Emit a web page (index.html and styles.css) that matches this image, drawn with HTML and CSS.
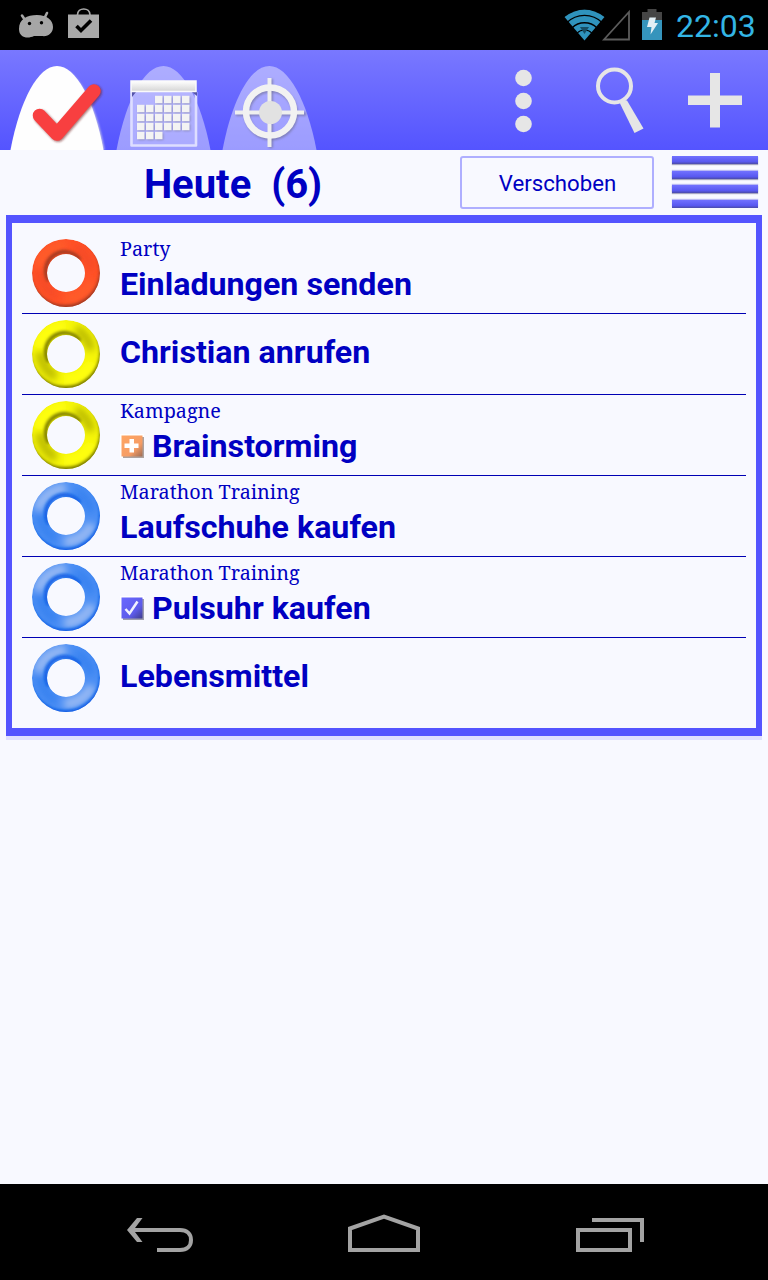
FILE: index.html
```html
<!DOCTYPE html>
<html lang="de">
<head>
    <meta charset="UTF-8">
    <title>Heute</title>
    <link rel="stylesheet" href="styles.css">
</head>
<body>
    <!-- shared gradients and the ring shape -->
    <svg class="defs" width="0" height="0">
        <defs>
            <clipPath id="ringClip">
                <path clip-rule="evenodd" d="M0 34a34 34 0 1 0 68 0a34 34 0 1 0-68 0zM15 34a19 19 0 1 0 38 0a19 19 0 1 0-38 0z"/>
            </clipPath>
            <filter id="soft" x="-30%" y="-30%" width="160%" height="160%"><feGaussianBlur stdDeviation="3.500"/></filter>
            <filter id="soft1" x="-30%" y="-30%" width="160%" height="160%"><feGaussianBlur stdDeviation="1"/></filter>
            <filter id="soft2" x="-30%" y="-30%" width="160%" height="160%"><feGaussianBlur stdDeviation="1.600"/></filter>
            <linearGradient id="head" x1="0" y1="0" x2="0" y2="1">
                <stop offset="0" stop-color="#fff"/><stop offset="1" stop-color="#d4d4d4"/>
            </linearGradient>
            <linearGradient id="orange" x1="0" y1="0" x2="1" y2="1">
                <stop offset="0" stop-color="#ffa562"/><stop offset="0.65" stop-color="#f69d65"/><stop offset="1" stop-color="#9c6c55"/>
            </linearGradient>
            <linearGradient id="violet" x1="0" y1="0" x2="1" y2="1">
                <stop offset="0" stop-color="#6a68ff"/><stop offset="0.65" stop-color="#5d5bea"/><stop offset="1" stop-color="#3f3d8c"/>
            </linearGradient>
            <symbol id="ring" viewBox="0 0 68 68">
                <g clip-path="url(#ringClip)">
                    <circle class="ring-base" cx="34" cy="34" r="34"/>
                    <g filter="url(#soft)" fill="none">
                        <path class="ring-mid" d="M8 32Q9 48 24 57M44 9Q56 15 59 30"/>
                        <path class="ring-light" d="M6 28Q11 9 34 6M32 60Q52 59 60 42"/>
                    </g>
                    <g filter="url(#soft2)" fill="none">
                        <circle class="ring-edge" cx="33" cy="31.500" r="37.500"/>
                        <path class="ring-inner" d="M17 42A18.500 18.500 0 0 1 48 21"/>
                    </g>
                </g>
            </symbol>
        </defs>
    </svg>

    <div class="statusbar">
        <svg width="110" height="50" viewBox="0 0 110 50">
            <path fill="#a6a6a6" d="M19 29C19 19 27 15 37 15C47 15 53 20 53 27C53 33 48 37 42 36H34C28 39 19 38 19 29z"/>
            <path stroke="#a6a6a6" stroke-width="2.600" stroke-linecap="round" d="M22 15.500l3 4.500M47 13l-2.500 5"/>
            <circle cx="29.500" cy="23.500" r="1.700"/><circle cx="41.500" cy="22.700" r="1.700"/>
            <path fill="#a9a9a9" d="M68 14.500h31V38H68z"/>
            <path fill="none" stroke="#a9a9a9" stroke-width="1.700" d="M77.500 15c0-8 12.500-8 12.500 0"/>
            <path fill="none" stroke="#000" stroke-width="3.600" d="M76.500 26l4.500 4.500l10-10"/>
        </svg>
        <div class="system">
            <svg width="105" height="50" viewBox="0 0 105 50">
                <clipPath id="wifi"><path d="M24.500 40.500L4.500 17Q24.500 2 44.500 17z"/></clipPath>
                <g clip-path="url(#wifi)" fill="none" stroke="#2f93bd">
                    <circle cx="24.500" cy="40.500" r="28.500" stroke-width="5.500"/>
                    <circle cx="24.500" cy="40.500" r="21.500" stroke-width="6"/>
                    <circle cx="24.500" cy="40.500" r="14" stroke-width="6"/>
                    <circle cx="24.500" cy="40.500" r="5" stroke-width="10"/>
                </g>
                <path fill="#174f66" d="M20 27h9l-4.500 7z"/>
                <path fill="none" stroke="#5c5c5c" stroke-width="1.800" d="M69 12v27.500H44z"/>
                <path fill="#454545" d="M82 12h5.500V9h9v3h5.500v8H82z"/>
                <path fill="#3594bc" d="M82 20h20v20H82z"/>
                <path fill="#e2eff5" d="M89.500 17.500h6.500L94.500 23H98l-7.500 11.500L91.500 27H87z"/>
            </svg>
            <span class="clock">22:03</span>
        </div>
    </div>

    <div class="toolbar">
        <svg width="330" height="100" viewBox="0 0 330 100">
            <path fill="#c9c9e8" d="M12 100C22 50 41 18 58 18C76 18 95 50 104.500 100z" filter="url(#soft1)"/>
            <path fill="#fefefe" d="M10.500 100C20 50 38 16 57 16C76 16 94 50 103.500 100z"/>
            <path fill="none" stroke="#702020" stroke-opacity=".6" stroke-width="14" stroke-linejoin="round" stroke-linecap="round" filter="url(#soft1)" d="M41 67l17 18l37-43"/>
            <path fill="none" stroke="#f83f40" stroke-width="13.500" stroke-linejoin="round" stroke-linecap="round" d="M39.500 65.500L57 84L94 41"/>
            <g fill="#fff" fill-opacity=".42">
                <path d="M116.500 100C126 50 144 16 163.500 16C182 16 201 50 210.500 100z"/>
                <path d="M222.500 100C232 50 250 16 269.500 16C288 16 307 50 316.500 100z"/>
            </g>
            <path fill="#fff" fill-opacity=".15" stroke="#dedeff" stroke-width="2.600" stroke-linejoin="round" d="M131.500 42V95.500h64.500V42"/>
            <path fill="#5554a8" d="M132 42h4l-4 5zM192 42h5v4z"/>
            <path fill="url(#head)" stroke="#fafafa" stroke-width="1.500" d="M131 31h65v10.500h-65z"/>
            <g stroke="#76769a" stroke-opacity=".65" stroke-width="7" stroke-dasharray="7.300 1.700" filter="url(#soft1)">
                <path d="M156 50.500h35M138 59.500h53M138 68.500h53M138 77.500h53M138 86.500h26"/>
            </g>
            <g stroke="#f3f3f3" stroke-width="7.400" stroke-dasharray="7.500 1.500">
                <path d="M155 49.500h35.500M137 58.500h53.500M137 67.500h53.500M137 76.500h53.500M137 85.500h26.500"/>
            </g>
            <g fill="none" stroke="#70709a" stroke-opacity=".65" filter="url(#soft1)">
                <circle cx="271" cy="63.500" r="24" stroke-width="6"/>
                <path stroke-width="4" d="M271 29v69M236 64h70"/>
            </g>
            <path stroke="#efefef" stroke-width="4" d="M269.500 28v69M235 62.500h69"/>
            <circle fill="none" stroke="#f2f2f2" stroke-width="6.500" cx="270" cy="61.500" r="24"/>
            <circle fill="#e2e2e2" cx="270.500" cy="62.500" r="11.500"/>
        </svg>
        <svg width="278" height="100" viewBox="0 0 278 100">
            <g fill="#e6e6e6">
                <circle cx="33.500" cy="28" r="8.300"/><circle cx="33.500" cy="51" r="8.300"/><circle cx="33.500" cy="74" r="8.300"/>
                <path d="M130 53.500q2-4 7-3l16.500 28l-9 4.500z"/>
                <path d="M220 23h10v22.500h22v9.500h-22v22.500h-10V55h-22v-9.500h22z"/>
            </g>
            <circle fill="none" stroke="#e6e6e6" stroke-width="4" cx="124.500" cy="36" r="16.500"/>
        </svg>
    </div>

    <div class="titlebar">
        <h1>Heute  (6)</h1>
        <button class="postponed">Verschoben</button>
        <div class="menu">
            <span></span><span></span><span></span><span></span>
        </div>
    </div>

    <div class="list">
        <div class="task">
            <svg class="ring red"><use href="#ring"/></svg>
            <div class="text">
                <div class="project">Party</div>
                <div class="name">Einladungen senden</div>
            </div>
        </div>
        <div class="task">
            <svg class="ring yellow"><use href="#ring"/></svg>
            <div class="text">
                <div class="name">Christian anrufen</div>
            </div>
        </div>
        <div class="task">
            <svg class="ring yellow"><use href="#ring"/></svg>
            <div class="text">
                <div class="project">Kampagne</div>
                <div class="name">
                    <svg class="badge" viewBox="0 0 24 24">
                        <path fill="#fff" d="M0 0h24v24H0z"/>
                        <path fill="#998b86" d="M3 3h21v21H3z" opacity=".8"/>
                        <path fill="url(#orange)" d="M1.500 1.500h21v21h-21z"/>
                        <path fill="#fff" d="M9.500 5h4.500v4.500H18.500V14H14v4.500H9.500V14H4.500V9.500H9.500z"/>
                    </svg>
                    Brainstorming
                </div>
            </div>
        </div>
        <div class="task">
            <svg class="ring blue"><use href="#ring"/></svg>
            <div class="text">
                <div class="project">Marathon Training</div>
                <div class="name">Laufschuhe kaufen</div>
            </div>
        </div>
        <div class="task">
            <svg class="ring blue"><use href="#ring"/></svg>
            <div class="text">
                <div class="project">Marathon Training</div>
                <div class="name">
                    <svg class="badge" viewBox="0 0 24 24">
                        <path fill="#fff" d="M0 0h24v24H0z"/>
                        <path fill="#85859a" d="M3 3h21v21H3z" opacity=".8"/>
                        <path fill="url(#violet)" d="M1.500 1.500h21v21h-21z"/>
                        <path fill="none" stroke="#f2f2ff" stroke-width="2.500" d="M5.500 13l4 4.500l8-12"/>
                    </svg>
                    Pulsuhr kaufen
                </div>
            </div>
        </div>
        <div class="task">
            <svg class="ring blue"><use href="#ring"/></svg>
            <div class="text">
                <div class="name">Lebensmittel</div>
            </div>
        </div>
    </div>

    <div class="navbar">
        <svg width="768" height="96" viewBox="0 0 768 96" fill="none" stroke="#a3a3a3" stroke-width="4">
            <path d="M130 46h50c7 0 11 4 11 10s-4 10-11 10H157"/>
            <path fill="#a3a3a3" stroke="none" d="M137 34h5.500l-9 12l9 12H137l-10-12z"/>
            <path d="M350 44.500v21.500h68v-21.500l-34-12z"/>
            <path d="M578 46h52v20h-52zM592 36h50v22"/>
        </svg>
    </div>
</body>
</html>
```
FILE: styles.css
```css
* {
    box-sizing: border-box;
}
body {
    margin: 0;
    height: 1280px;
    display: flex;
    flex-direction: column;
    background: #f8f9ff;
    color: #0000c2;
    font-family: Roboto, sans-serif;
    overflow: hidden;
}
svg {
    display: block;
    flex: none;
}
.defs {
    position: absolute;
}
.statusbar {
    display: flex;
    justify-content: space-between;
    height: 50px;
    background: #000;
}
.system {
    display: flex;
    width: 208px;
}
.clock {
    margin-left: 11px;
    color: #33b5e5;
    font-size: 32px;
    line-height: 53px;
}
.toolbar {
    display: flex;
    justify-content: space-between;
    height: 100px;
    background: linear-gradient(#7978ff, #5454ff);
}
.titlebar {
    display: flex;
    height: 65px;
    padding: 6px 10px 0 6px;
}
h1 {
    width: 454px;
    margin: 0;
    font-size: 40px;
    line-height: 57px;
    text-align: center;
    white-space: pre;
}
.postponed {
    width: 194px;
    height: 53px;
    padding: 0 0 0 1px;
    border: 2px solid #afafff;
    border-radius: 3px;
    background: #f8f9ff;
    color: #0000c2;
    font-family: Roboto, sans-serif;
    font-size: 22.2px;
}
.menu {
    display: flex;
    flex-direction: column;
    justify-content: space-between;
    width: 86px;
    height: 52px;
    margin-left: 18px;
}
.menu span {
    height: 8px;
    background: linear-gradient(#7171ff, #5858f0 70%, #4a4aa8);
    box-shadow: 0 1px 1px #a5a5c0, 0 -1px 1px #b9b9f5;
}
.menu span:first-child {
    box-shadow: 0 1px 1px #a5a5c0;
}
.menu span:last-child {
    box-shadow: 0 -1px 1px #b9b9f5;
}
.list {
    margin: 0 6px;
    padding: 10px;
    border: solid #5454ff;
    border-width: 8px 6px;
    box-shadow: 0 4px #e0e0ff;
}
.task {
    display: flex;
    align-items: center;
    height: 81px;
    padding-left: 10px;
    border-bottom: 1px solid #0000b4;
}
.task:last-child {
    height: 80px;
    border-bottom: none;
}
.ring {
    width: 68px;
    height: 68px;
    margin-right: 20px;
}
.ring-base { fill: var(--base); }
.ring-mid { stroke: var(--mid); stroke-width: 9px; }
.ring-light { stroke: var(--light); stroke-width: 11px; }
.ring-edge { stroke: var(--edge); stroke-width: 6px; }
.ring-inner { stroke: var(--edge); stroke-width: 3.5px; }
.red { --base: #ff5026; --mid: #f64c28; --light: #ff5c2a; --edge: #9c3820; }
.yellow { --base: #f4f408; --mid: #bcbc05; --light: #ffff0c; --edge: #757500; }
.blue { --base: #4a8ef4; --mid: #3882f0; --light: #94b8f4; --edge: #0a5ce4; }
.project {
    height: 31px;
    font-family: "Noto Serif", "Droid Serif", "DejaVu Serif Condensed", "DejaVu Serif", serif;
    font-size: 19.8px;
    line-height: 30px;
}
.name {
    display: flex;
    align-items: center;
    height: 40px;
    padding-bottom: 4px;
    font-size: 32.2px;
    font-weight: bold;
    line-height: 38px;
    white-space: nowrap;
}
/* two-line entries sit a little higher in the row */
.project + .name {
    height: 48px;
    padding-bottom: 9px;
}
.badge {
    width: 24px;
    height: 24px;
    margin-right: 8px;
}
.navbar {
    height: 96px;
    margin-top: auto;
    background: #000;
}
```
